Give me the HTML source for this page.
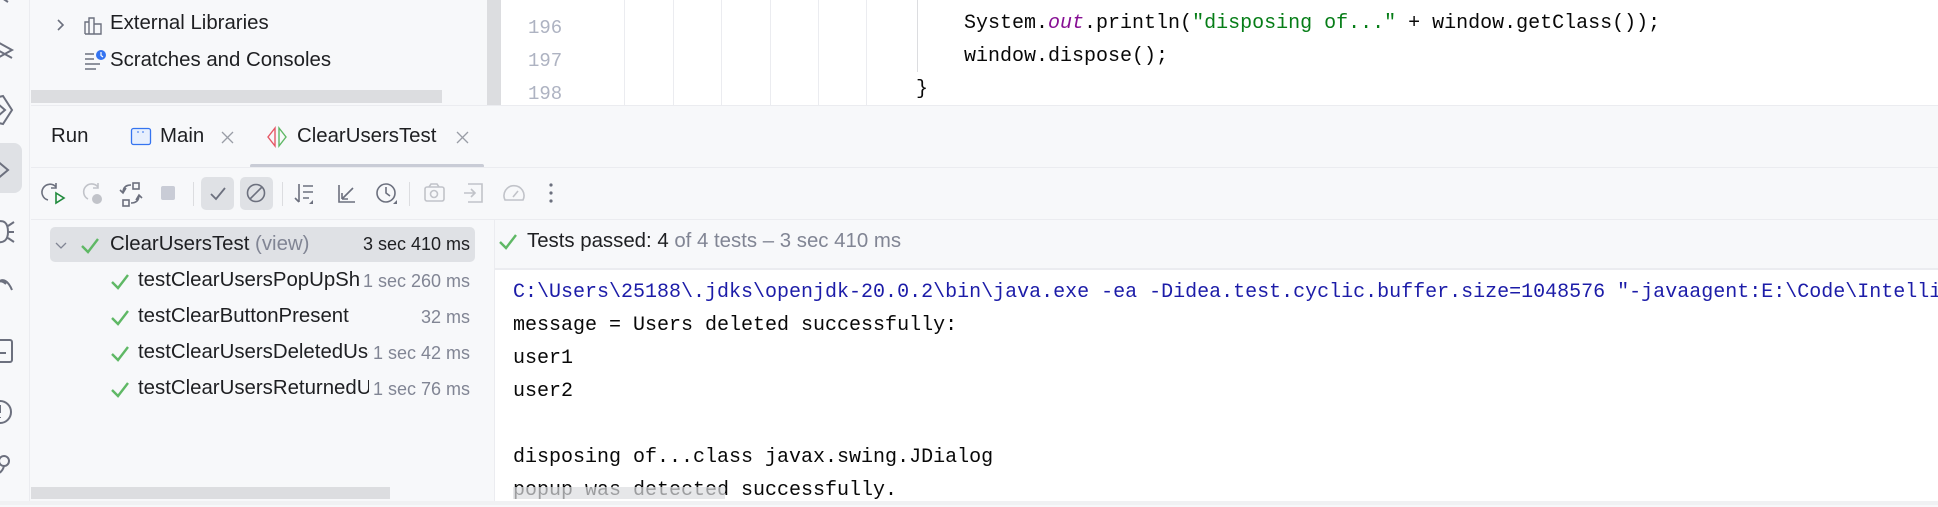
<!DOCTYPE html>
<html><head><meta charset="utf-8"><style>
*{margin:0;padding:0;box-sizing:border-box}
body{width:1938px;height:505px;overflow:hidden;background:#f7f8fa;font-family:"Liberation Sans",sans-serif;color:#1e1f22;position:relative}
.a{position:absolute}
.mono{font-family:"Liberation Mono",monospace;font-size:20px;white-space:pre}
.ui{font-size:19px;white-space:nowrap}
.ub{font-size:20.4px}
.g{color:#818594}
svg{position:absolute;overflow:visible}
</style></head><body>
<!-- left strip -->
<div class="a" style="left:0;top:0;width:30px;height:505px;background:#f7f8fa;border-right:1px solid #ebecf0"></div>
<div class="a" style="left:0;top:143px;width:22px;height:50px;background:#dfe1e5;border-radius:0 8px 8px 0"></div>
<svg width="30" height="505" style="left:0;top:0" fill="none" stroke="#6c707e" stroke-width="2">
<path d="M-4 -6 L8 2"/>
<path d="M-6 40 L12 50 L-6 60 M-6 48 L12 58"/>
<path d="M-6 98 L3 96 L12 110 L3 124 L-6 122 M-2 104 L5 110 L-2 116"/>
<path d="M-4 160 L8 170 L-4 180"/>
<path d="M-4 222 Q8 218 8 232 Q8 244 -4 242 M8 226 L14 222 M8 232 L14 232 M8 238 L14 242"/>
<path d="M-2 300 L-2 282 Q6 276 12 290 M-2 282 Q2 280 6 284"/>
<rect x="-10" y="340" width="22" height="22" rx="2"/><path d="M-2 353 L6 353"/>
<circle cx="0" cy="412" r="11"/><path d="M0 405 L0 413 M0 417 L0 418"/>
<circle cx="4" cy="461" r="5"/><path d="M4 466 Q2 474 -6 474"/>
</svg>
<!-- project panel -->
<svg width="20" height="20" style="left:52px;top:17px" fill="none" stroke="#6c707e" stroke-width="1.6"><path d="M6 3 L11 8 L6 13"/></svg>
<svg width="20" height="20" style="left:84px;top:16px" fill="none" stroke="#6c707e" stroke-width="1.4"><path d="M1 18 L1 6 L5 6 L5 18 M5 18 L5 2 L10 2 L10 18 M10 18 L10 8 L17 8 L17 18 Z M1 18 L17 18"/></svg>
<div class="a ui ub" style="left:110px;top:12px">External Libraries</div>
<svg width="22" height="20" style="left:84px;top:50px" fill="none" stroke="#6c707e" stroke-width="1.5"><path d="M1 4 L10 4 M1 9 L10 9 M1 14 L16 14 M1 19 L12 19"/><circle cx="17" cy="5" r="5" fill="#3574f0" stroke="none"/><path d="M17 2 L17 5.5 L19 7" stroke="#fff" stroke-width="1.2"/></svg>
<div class="a ui ub" style="left:110px;top:49px">Scratches and Consoles</div>
<div class="a" style="left:31px;top:90px;width:411px;height:13px;background:#dcdde0"></div>
<div class="a" style="left:488px;top:0;width:13px;height:105px;background:#dcdde0"></div>
<div class="a" style="left:501px;top:0;width:2px;height:105px;background:#fff"></div>
<!-- editor -->
<div class="a" style="left:503px;top:0;width:1435px;height:105px;background:#fff"></div>
<div class="a" style="left:487px;top:0;width:8px;height:105px;background:#dcdde0"></div>
<div class="a mono" style="left:528px;top:12px;color:#aeb3c2;line-height:33px;font-size:19px">196
197
198</div>
<div class="a" style="left:624px;top:0;width:1px;height:105px;background:#ebecf0"></div>
<div class="a" style="left:673px;top:0;width:1px;height:105px;background:#ebecf0"></div>
<div class="a" style="left:721px;top:0;width:1px;height:105px;background:#ebecf0"></div>
<div class="a" style="left:770px;top:0;width:1px;height:105px;background:#ebecf0"></div>
<div class="a" style="left:818px;top:0;width:1px;height:105px;background:#ebecf0"></div>
<div class="a" style="left:866px;top:0;width:1px;height:105px;background:#ebecf0"></div>
<div class="a" style="left:917px;top:0;width:1px;height:72px;background:#dcdde0"></div>
<div class="a mono" style="left:964px;top:12px;color:#080808">System.<i style="color:#871094">out</i>.println(<span style="color:#067d17">"disposing of..."</span> + window.getClass());</div>
<div class="a mono" style="left:964px;top:45px;color:#080808">window.dispose();</div>
<div class="a mono" style="left:916px;top:78px;color:#080808">}</div>
<div class="a" style="left:31px;top:105px;width:1907px;height:1px;background:#ebecf0"></div>
<!-- tabs -->
<div class="a ui ub" style="left:51px;top:125px">Run</div>
<svg width="22" height="20" style="left:131px;top:128px" fill="#e7effd" stroke="#3574f0" stroke-width="1.3"><rect x="0.5" y="0.5" width="19" height="16" rx="2"/><path d="M6 4 L8 4 M11 4 L13 4" stroke-width="1"/></svg>
<div class="a ui ub" style="left:160px;top:125px">Main</div>
<svg width="14" height="14" style="left:221px;top:131px" stroke="#9a9da6" stroke-width="1.3"><path d="M1 1 L12 12 M12 1 L1 12"/></svg>
<svg width="22" height="20" style="left:267px;top:127px" fill="none" stroke-width="1.4"><path d="M8 1 L1 10 L8 19 Z" stroke="#e55765"/><path d="M12 1 L19 10 L12 19 Z" stroke="#5fb865"/></svg>
<div class="a ui ub" style="left:297px;top:125px">ClearUsersTest</div>
<svg width="14" height="14" style="left:456px;top:131px" stroke="#9a9da6" stroke-width="1.3"><path d="M1 1 L12 12 M12 1 L1 12"/></svg>
<div class="a" style="left:250px;top:164px;width:234px;height:4px;background:#c9ccd6;border-radius:2px"></div>
<div class="a" style="left:31px;top:167px;width:1907px;height:1px;background:#ebecf0"></div>
<!-- toolbar -->
<div class="a" style="left:201px;top:177px;width:33px;height:33px;background:#dfe1e5;border-radius:5px"></div>
<div class="a" style="left:240px;top:177px;width:33px;height:33px;background:#dfe1e5;border-radius:5px"></div>
<div class="a" style="left:193px;top:182px;width:1px;height:24px;background:#dcdde0"></div>
<div class="a" style="left:282px;top:182px;width:1px;height:24px;background:#dcdde0"></div>
<div class="a" style="left:409px;top:182px;width:1px;height:24px;background:#dcdde0"></div>
<svg width="600" height="40" style="left:0;top:173px" fill="none" stroke="#6c707e" stroke-width="1.6">
<path d="M56 14 A8 8 0 1 0 48 27 M56 10 L56 15 L51 15"/><path d="M56 20 L64 25 L56 30 Z" stroke="#208a3c"/>
<path d="M98 14 A8 8 0 1 0 88 26 M98 10 L98 15 L93 15" stroke="#c1c3c9"/><circle cx="97" cy="26" r="5" fill="#c1c3c9" stroke="none"/>
<rect x="133" y="10" width="6" height="6"/><rect x="123" y="27" width="6" height="6"/><path d="M123 20 Q123 12 131 12 M126 15 L123 20 L120 17 M139 22 Q139 30 131 30 M136 27 L139 22 L142 25"/>
<rect x="161" y="13" width="14" height="14" rx="2" fill="#c9ccd6" stroke="none"/>
<path d="M211 21 L216 26 L225 15" stroke-width="1.8"/>
<circle cx="256" cy="20" r="8.5"/><path d="M250 26 L262 14"/>
<path d="M299 11 L299 29 M295 25 L299 29 M303 13 L313 13 M303 19 L313 19 M303 25 L309 25"/><path d="M313 27 L313 31 L309 31 Z" fill="#6c707e" stroke="none"/>
<path d="M339 12 L339 29 L355 29 M342 26 L353 15 M342 26 L342 20 M342 26 L348 26"/>
<circle cx="386" cy="20" r="9"/><path d="M386 14 L386 20 L390 23"/><path d="M397 27 L397 31 L393 31 Z" fill="#6c707e" stroke="none"/>
<g stroke="#c1c3c9"><rect x="425" y="14" width="19" height="14" rx="2"/><circle cx="434" cy="21" r="3.5"/><path d="M429 14 L431 11 L437 11 L439 14"/>
<path d="M468 11 L482 11 L482 29 L468 29 M464 20 L475 20 M471 16 L475 20 L471 24"/>
<path d="M505 27 A10 10 0 1 1 523 27 Z M513 24 L518 18"/></g>
<circle cx="551" cy="12" r="1.6" fill="#6c707e" stroke="none"/><circle cx="551" cy="20" r="1.6" fill="#6c707e" stroke="none"/><circle cx="551" cy="28" r="1.6" fill="#6c707e" stroke="none"/>
</svg>
<div class="a" style="left:31px;top:219px;width:1907px;height:1px;background:#ebecf0"></div>
<!-- tree -->
<div class="a" style="left:50px;top:227px;width:425px;height:35px;background:#dfe1e5;border-radius:5px"></div>
<svg width="14" height="14" style="left:55px;top:240px" fill="none" stroke="#818594" stroke-width="1.3"><path d="M1 3 L6 8 L11 3"/></svg>
<svg width="600" height="200" style="left:0;top:230px" fill="none" stroke="#5fb865" stroke-width="2.4">
<path d="M82 16 L88 22 L98 9"/>
<path d="M112 52 L118 58 L128 45"/>
<path d="M112 88 L118 94 L128 81"/>
<path d="M112 124 L118 130 L128 117"/>
<path d="M112 160 L118 166 L128 153"/>
</svg>
<div class="a ui ub" style="left:110px;top:233px">ClearUsersTest <span class="g">(view)</span></div>
<div class="a ui" style="right:1468px;top:234px;font-size:18px">3 sec 410 ms</div>
<div class="a ui ub" style="left:138px;top:269px;width:221px;overflow:hidden">testClearUsersPopUpShown</div>
<div class="a ui g" style="right:1468px;top:271px;font-size:18px">1 sec 260 ms</div>
<div class="a ui ub" style="left:138px;top:305px">testClearButtonPresent</div>
<div class="a ui g" style="right:1468px;top:307px;font-size:18px">32 ms</div>
<div class="a ui ub" style="left:138px;top:341px;width:231px;overflow:hidden">testClearUsersDeletedUsers</div>
<div class="a ui g" style="right:1468px;top:343px;font-size:18px">1 sec 42 ms</div>
<div class="a ui ub" style="left:138px;top:377px;width:231px;overflow:hidden">testClearUsersReturnedUsers</div>
<div class="a ui g" style="right:1468px;top:379px;font-size:18px">1 sec 76 ms</div>
<div class="a" style="left:31px;top:487px;width:359px;height:12px;background:#dcdde0"></div>
<!-- right -->
<div class="a" style="left:494px;top:220px;width:1px;height:285px;background:#ebecf0"></div>
<div class="a" style="left:495px;top:268px;width:1443px;height:2px;background:#ebecf0"></div>
<svg width="20" height="20" style="left:499px;top:232px" fill="none" stroke="#5fb865" stroke-width="2.4"><path d="M1 10 L7 16 L17 3"/></svg>
<div class="a ui ub" style="left:527px;top:230px">Tests passed: 4 <span class="g">of 4 tests – 3 sec 410 ms</span></div>
<div class="a" style="left:495px;top:270px;width:1443px;height:231px;background:#fff"></div>
<div class="a mono" style="left:513px;top:276px;line-height:33px;color:#080808"><span style="color:#1c1ca8">C:\Users\25188\.jdks\openjdk-20.0.2\bin\java.exe -ea -Didea.test.cyclic.buffer.size=1048576 "-javaagent:E:\Code\IntelliJ</span>
message = Users deleted successfully:
user1
user2

disposing of...class javax.swing.JDialog
popup was detected successfully.</div>
<div class="a" style="left:513px;top:487px;width:212px;height:12px;background:#dcdde0;opacity:.7"></div>
<div class="a" style="left:0;top:501px;width:1938px;height:4px;background:#f0f1f3"></div>
</body></html>
